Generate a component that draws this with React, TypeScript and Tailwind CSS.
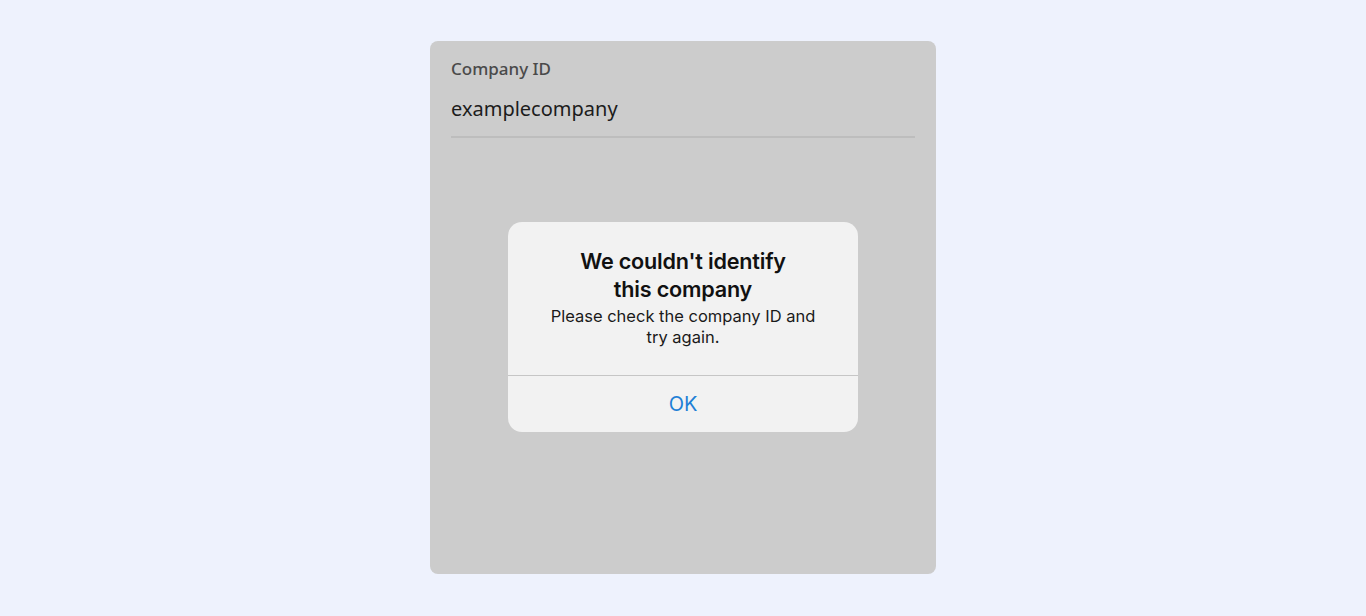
export default function App() {
  return (
    <div className="flex h-[616px] w-full justify-center bg-[#eef2fd] pt-[41px]">
      <div className="relative h-[533px] w-[506px] rounded-[8px] bg-[#cccccc] px-[21px] pt-[16px]">
        <label className="block font-['Noto_Sans',sans-serif] text-[17px] font-medium leading-[24px] text-[#4a4a4a]">
          Company ID
        </label>
        <div className="mt-[15px] border-b-2 border-[#bdbdbd] pb-[14px] font-['Noto_Sans',sans-serif] text-[20px] leading-[26px] text-[#1c1c1c]">
          examplecompany
        </div>

        {/* alert dialog */}
        <div className="absolute left-[78px] top-[181px] w-[350px] overflow-hidden rounded-[14px] bg-[#f2f2f2] font-['Inter',sans-serif]">
          <div className="flex h-[153px] flex-col items-center px-[26px] pt-[25px] text-center">
            <h2 className="text-[21.6px] font-semibold leading-[28px] tracking-[-0.2px] text-[#111111]">
              We couldn't identify
              <br />
              this company
            </h2>
            <p className="mt-[3px] text-[16.5px] leading-[21px] text-[#1a1a1a]">
              Please check the company ID and
              <br />
              try again.
            </p>
          </div>
          <div className="border-t border-[#c6c6c6]" />
          <button className="flex h-[56px] w-full items-center justify-center text-[20px] text-[#1e7fd6]">
            OK
          </button>
        </div>
      </div>
    </div>
  );
}
